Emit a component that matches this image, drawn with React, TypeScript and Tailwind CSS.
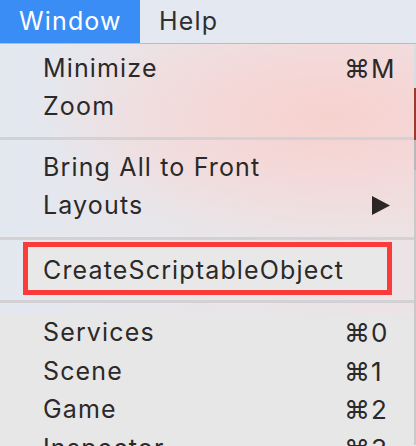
import React from "react";

type Item = { label: string; shortcut?: string; submenu?: boolean };

const groups: Item[][] = [
  [{ label: "Minimize", shortcut: "⌘M" }, { label: "Zoom" }],
  [{ label: "Bring All to Front" }, { label: "Layouts", submenu: true }],
];

const windows: Item[] = [
  { label: "Services", shortcut: "⌘0" },
  { label: "Scene", shortcut: "⌘1" },
  { label: "Game", shortcut: "⌘2" },
  { label: "Inspector", shortcut: "⌘3" },
];

function Row({ item, inset = 43 }: { item: Item; inset?: number }) {
  return (
    <div
      className={`flex h-[38.5px] items-center whitespace-nowrap ${inset === 43 ? "pl-[43px]" : "pl-[15px]"}`}
    >
      <span className="flex-1">{item.label}</span>
      {item.shortcut && (
        <span className="w-[70px] text-[26px] tracking-[1px]">
          {item.shortcut}
        </span>
      )}
      {item.submenu && (
        <svg width="18" height="19" viewBox="0 0 18 19" className="mr-[24px]">
          <path d="M0 0 L18 9.5 L0 19 Z" fill="#2d2626" />
        </svg>
      )}
    </div>
  );
}

function Separator({ className = "" }: { className?: string }) {
  return <div className={`h-[3px] bg-[#d3d1d4] ${className}`} />;
}

export default function App() {
  return (
    <div className="relative h-[446px] w-[416px] overflow-hidden bg-[#e6e9ef] font-['Inter','Liberation_Sans',sans-serif] text-[25px] tracking-[1.15px] text-[#2b2929]">
      {/* Menu bar */}
      <div className="flex h-[44px] border-b border-[#b9bcc2] bg-[#e4e9f1]">
        <div className="flex w-[140px] items-center bg-[#3a8df5] pl-[19px] text-white">Window</div>
        <div className="flex items-center pl-[19px] text-[#2f2f2f]">Help</div>
      </div>

      <div className="flex h-[401px]">
        {/* Dropdown panel */}
        <div className="w-[414px] bg-[radial-gradient(ellipse_70%_32%_at_80%_18%,#f6d1ce_0%,#f4d9d9_45%,transparent_100%),linear-gradient(90deg,#e3e8f0_0%,#e8e6ea_40%,#ece3e5_100%)] pt-[5px]">
          <Row item={groups[0][0]} />
          <Row item={groups[0][1]} />
          <Separator className="mt-[11px] mb-[8px]" />
          <Row item={groups[1][0]} />
          <Row item={groups[1][1]} />
          <Separator className="mt-[12px]" />

          <div className="mt-[2px] ml-[23px] w-[369px] border-[5px] border-[#fb3a3a] bg-[#e8e8e8]">
            <div className="h-[4px]" />
            <Row item={{ label: "CreateScriptableObject" }} inset={15} />
          </div>

          <Separator className="mt-[5px] mb-[11px]" />
          <div className="bg-[#e7e7e8]">
            {windows.map((w) => (
              <Row key={w.label} item={w} />
            ))}
          </div>
        </div>

        {/* sliver of the window behind */}
        <div className="flex w-[2px] flex-col">
          <div className="h-[44px] bg-[#d9dde4]" />
          <div className="h-[52px] bg-[#9b3b30]" />
          <div className="h-[30px] bg-[#b9b9bb]" />
          <div className="flex-1 bg-[#c9c9cb]" />
        </div>
      </div>
    </div>
  );
}
